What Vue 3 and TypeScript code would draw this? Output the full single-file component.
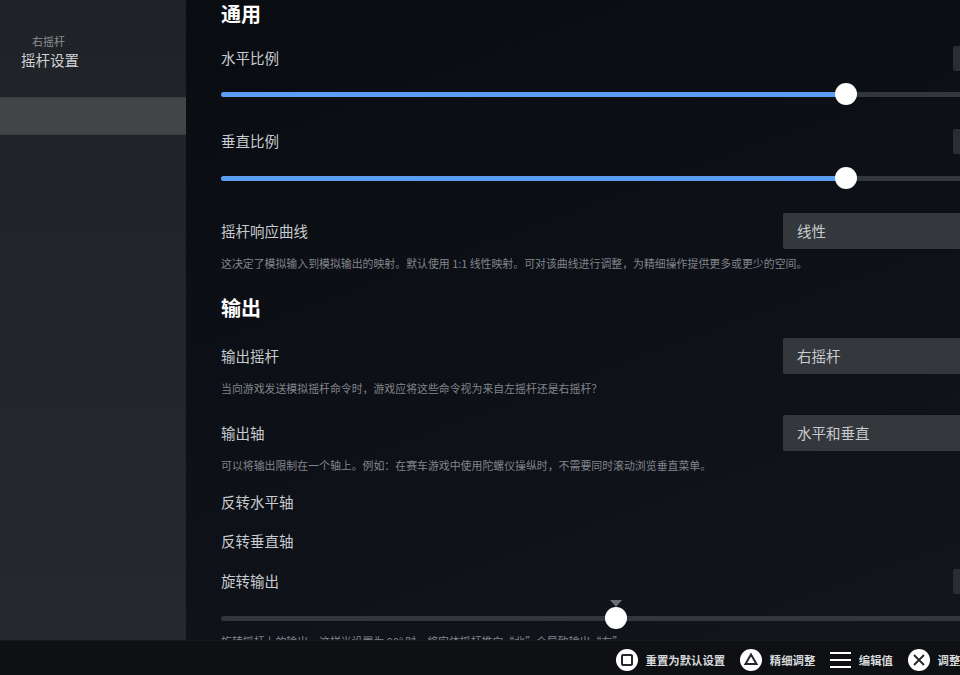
<script setup lang="ts">
const hints = [
  { label: '重置为默认设置', icon: 'square' },
  { label: '精细调整', icon: 'triangle' },
  { label: '编辑值', icon: 'menu' },
  { label: '调整', icon: 'cross' },
]
</script>

<template>
  <div class="screen">
    <div class="body">
      <aside class="sidebar">
        <div class="side-head">
          <div class="side-sub">右摇杆</div>
          <div class="side-title">摇杆设置</div>
        </div>
        <div class="side-item"></div>
      </aside>

      <main class="main">
        <div class="content">
          <h2 class="heading">通用</h2>

          <div class="row first">
            <span class="label">水平比例</span>
            <span class="value"></span>
          </div>
          <div class="slider">
            <div class="track"></div>
            <div class="fill" :style="{ width: '625px' }"></div>
            <div class="thumb" :style="{ left: '625px' }"></div>
          </div>

          <div class="row">
            <span class="label">垂直比例</span>
            <span class="value"></span>
          </div>
          <div class="slider low">
            <div class="track"></div>
            <div class="fill" :style="{ width: '625px' }"></div>
            <div class="thumb" :style="{ left: '625px' }"></div>
          </div>

          <div class="select-row curve">
            <span class="label">摇杆响应曲线</span>
            <span class="select">线性</span>
          </div>
          <p class="desc">这决定了模拟输入到模拟输出的映射。默认使用 1:1 线性映射。可对该曲线进行调整，为精细操作提供更多或更少的空间。</p>

          <h2 class="heading second">输出</h2>

          <div class="select-row first">
            <span class="label">输出摇杆</span>
            <span class="select">右摇杆</span>
          </div>
          <p class="desc">当向游戏发送模拟摇杆命令时，游戏应将这些命令视为来自左摇杆还是右摇杆？</p>

          <div class="select-row axis">
            <span class="label">输出轴</span>
            <span class="select">水平和垂直</span>
          </div>
          <p class="desc">可以将输出限制在一个轴上。例如：在赛车游戏中使用陀螺仪操纵时，不需要同时滚动浏览垂直菜单。</p>

          <div class="toggle-row top"><span class="label">反转水平轴</span></div>
          <div class="toggle-row"><span class="label">反转垂直轴</span></div>

          <div class="row rotate">
            <span class="label">旋转输出</span>
            <span class="value"></span>
          </div>
          <div class="slider low">
            <div class="track"></div>
            <div class="tick" :style="{ left: '395px' }"></div>
            <div class="thumb" :style="{ left: '395px' }"></div>
          </div>
          <p class="desc last">旋转摇杆上的输出。这样当设置为 90° 时，将实体摇杆推向“北”会导致输出“左”。</p>
        </div>
      </main>
    </div>

    <footer class="footer">
      <div v-for="hint in hints" :key="hint.label" class="hint">
        <svg v-if="hint.icon === 'square'" class="glyph" width="22" height="22" viewBox="0 0 22 22">
          <circle cx="11" cy="11" r="11" fill="#fff" />
          <rect x="6" y="6" width="10" height="10" rx="1" fill="none" stroke="#23262a" stroke-width="2" />
        </svg>
        <svg v-else-if="hint.icon === 'triangle'" class="glyph" width="22" height="22" viewBox="0 0 22 22">
          <circle cx="11" cy="11" r="11" fill="#fff" />
          <path d="M11 5.5 L16.5 15 L5.5 15 Z" fill="none" stroke="#23262a" stroke-width="2" />
        </svg>
        <svg v-else-if="hint.icon === 'menu'" class="glyph" width="21" height="22" viewBox="0 0 21 22">
          <rect x="0" y="3" width="21" height="2" fill="#fff" />
          <rect x="0" y="10" width="21" height="2" fill="#fff" />
          <rect x="0" y="17" width="21" height="2" fill="#fff" />
        </svg>
        <svg v-else class="glyph" width="22" height="22" viewBox="0 0 22 22">
          <circle cx="11" cy="11" r="11" fill="#fff" />
          <path d="M6 6 L16 16 M16 6 L6 16" stroke="#23262a" stroke-width="1.8" />
        </svg>
        <span class="hint-text">{{ hint.label }}</span>
      </div>
    </footer>
  </div>
</template>

<style scoped>
.screen {
  width: 960px;
  height: 675px;
  overflow: hidden;
  display: flex;
  flex-direction: column;
  font-family: "Noto Sans CJK SC", "Liberation Sans", sans-serif;
  background: #0c0f15;
}

.body {
  flex: 1;
  min-height: 0;
  display: flex;
}

.sidebar {
  width: 186px;
  flex-shrink: 0;
  background: linear-gradient(180deg, #1f2226 0%, #25292d 100%);
}

.side-head {
  height: 97px;
  padding-left: 21px;
  padding-top: 34px;
  box-sizing: border-box;
}

.side-sub {
  font-size: 11px;
  line-height: 15px;
  color: #8b8e92;
  padding-left: 11px;
}

.side-title {
  font-size: 14.5px;
  line-height: 22px;
  color: #d0d3d6;
}

.side-item {
  height: 38px;
  box-sizing: border-box;
  border-top: 1px solid #3a3b3f;
  border-bottom: 1px solid #3a3b3f;
  background: #434448;
}

.main {
  flex: 1;
  min-width: 0;
  overflow: hidden;
  background: linear-gradient(160deg, #090c11 0%, #0d1016 50%, #12151c 100%);
}

.content {
  width: 880px;
  margin-left: 35px;
  margin-top: -1px;
}

.heading {
  margin: 0;
  font-size: 20px;
  line-height: 30px;
  font-weight: 700;
  color: #fff;
}

.heading.second {
  margin-top: 23px;
}

.label {
  font-size: 14.5px;
  line-height: 22px;
  color: #c8cbcf;
}

.row {
  height: 25px;
  margin-top: 23px;
  display: flex;
  align-items: center;
  justify-content: space-between;
}

.row .label {
  margin-bottom: 2px;
}

.row.first {
  margin-top: 17px;
}

.row.rotate {
  margin-top: 9px;
}

.value {
  width: 148px;
  height: 25px;
  border-radius: 2px;
  background: #2a2d31;
}

.slider {
  position: relative;
  height: 23px;
  margin-top: 12px;
}

.slider.low {
  margin-top: 13px;
}

.track,
.fill {
  position: absolute;
  left: 0;
  top: 9px;
  height: 5px;
  border-radius: 3px;
}

.track {
  width: 100%;
  background: #33363a;
}

.fill {
  background: #5a9df5;
}

.thumb {
  position: absolute;
  top: 0;
  width: 22px;
  height: 22px;
  margin-left: -11px;
  border-radius: 50%;
  background: #fff;
}

.tick {
  position: absolute;
  top: -7px;
  margin-left: -6px;
  border-left: 6px solid transparent;
  border-right: 6px solid transparent;
  border-top: 7px solid #6b6e73;
}

.select-row {
  display: flex;
  align-items: center;
  justify-content: space-between;
}

.select-row.curve {
  margin-top: 23px;
}

.select-row.first {
  margin-top: 15px;
}

.select-row.axis {
  margin-top: 20px;
}

.select {
  width: 318px;
  height: 36px;
  padding: 0 0 2px 14px;
  box-sizing: border-box;
  display: flex;
  align-items: center;
  border-radius: 2px;
  font-size: 14.5px;
  color: #c8cbcf;
  background: #34373b;
}

.desc {
  margin: 7px 0 0;
  font-size: 10.9px;
  line-height: 14px;
  color: #81858b;
}

.desc.last {
  margin-top: 4px;
}

.toggle-row {
  height: 39px;
  display: flex;
  align-items: center;
}

.toggle-row.top {
  margin-top: 10px;
}

.footer {
  height: 35px;
  flex-shrink: 0;
  box-sizing: border-box;
  padding: 3px 0 0 616px;
  display: flex;
  align-items: center;
  gap: 15px;
  white-space: nowrap;
  border-top: 1px solid #17191d;
  background: #0e1014;
}

.hint {
  display: flex;
  align-items: center;
  gap: 7.5px;
  flex-shrink: 0;
}

.glyph {
  flex-shrink: 0;
}

.hint-text {
  font-size: 11.4px;
  font-weight: 700;
  color: #d6d8da;
}
</style>

<style>
body {
  background: #0c0f15;
}
</style>
